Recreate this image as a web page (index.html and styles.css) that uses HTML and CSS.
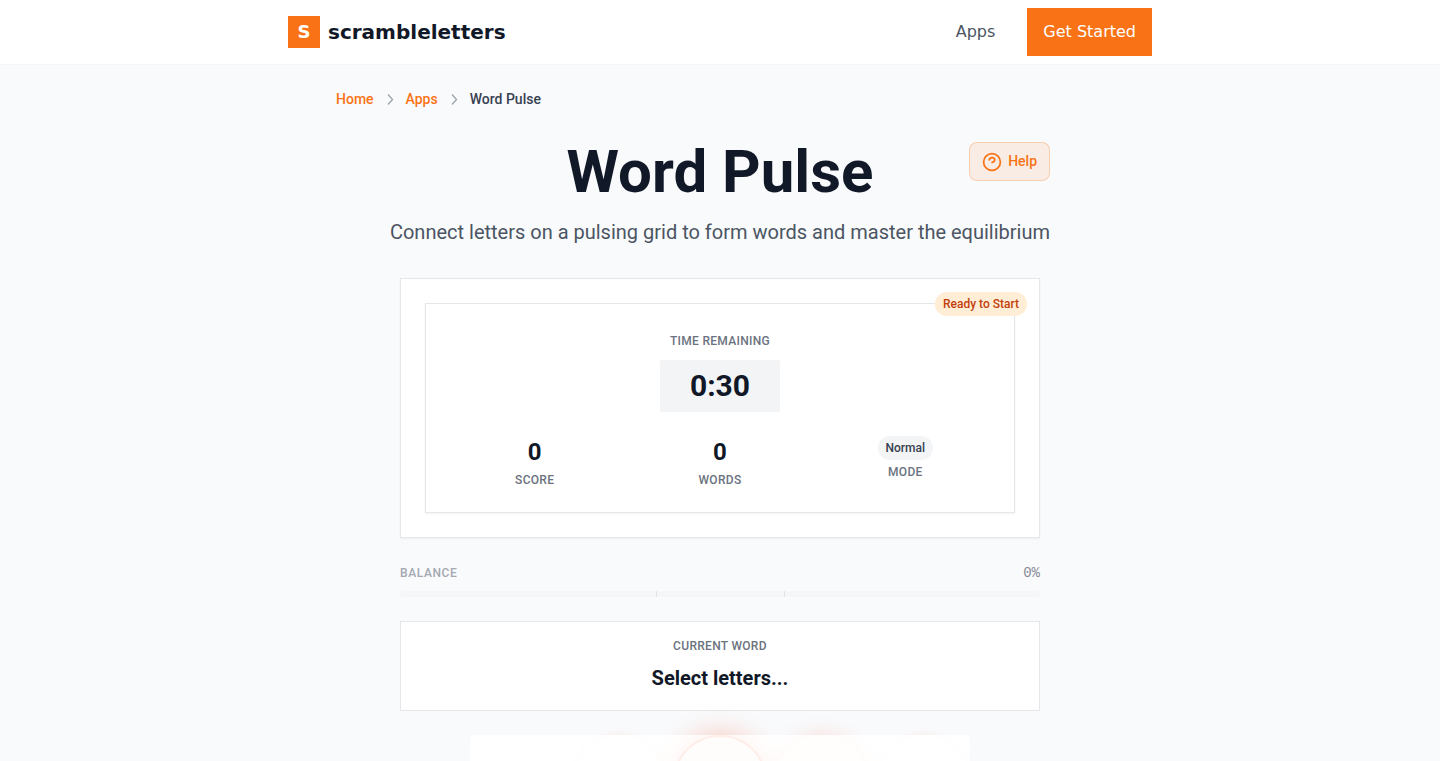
FILE: index.html
```
<!DOCTYPE html>
<html lang="en">
<head>
    <meta charset="UTF-8">
    <meta name="viewport" content="width=device-width, initial-scale=1.0">
    <title>Word Pulse</title>
    <link rel="stylesheet" href="styles.css">
</head>
<body>

    <header class="header">
        <div class="header-inner">
            <a class="brand" href="#">
                <span class="brand-mark">S</span>
                <span>scrambleletters</span>
            </a>
            <nav class="nav">
                <a class="nav-link" href="#">Apps</a>
                <a class="nav-btn" href="#">Get Started</a>
            </nav>
        </div>
    </header>

    <main class="main">
        <nav class="breadcrumb">
            <a href="#">Home</a>
            <svg class="chevron" viewBox="0 0 16 16"><path d="M6 3.5 10.5 8.5 6 13.5"/></svg>
            <a href="#">Apps</a>
            <svg class="chevron" viewBox="0 0 16 16"><path d="M6 3.5 10.5 8.5 6 13.5"/></svg>
            <span>Word Pulse</span>
        </nav>

        <div class="hero">
            <h1>Word Pulse</h1>
            <p>Connect letters on a pulsing grid to form words and master the equilibrium</p>
            <button class="help-btn" type="button">
                <svg viewBox="0 0 20 20">
                    <circle cx="10" cy="10" r="8.4"/>
                    <path d="M7.3 7.9C7.6 6.6 8.7 5.7 10.1 5.7c1.5 0 2.6 1 2.6 2.2 0 1.3-1.1 2-2.6 2.5"/>
                </svg>
                <span>Help</span>
            </button>
        </div>

        <div class="game">
            <section class="card">
                <span class="badge status">Ready to Start</span>
                <div class="panel">
                    <div class="label time-label">Time Remaining</div>
                    <div class="timer">0:30</div>
                    <div class="stats">
                        <div>
                            <div class="value">0</div>
                            <div class="label">Score</div>
                        </div>
                        <div>
                            <div class="value">0</div>
                            <div class="label">Words</div>
                        </div>
                        <div>
                            <span class="badge mode">Normal</span>
                            <div class="label">Mode</div>
                        </div>
                    </div>
                </div>
            </section>

            <section class="balance">
                <div class="balance-row">
                    <span class="label balance-label">Balance</span>
                    <span class="percent">0%</span>
                </div>
                <div class="bar"><div class="zone"></div></div>
            </section>

            <section class="word">
                <div class="label">Current Word</div>
                <div class="word-text">Select letters...</div>
            </section>

            <div class="board">
                <span class="cell"></span>
                <span class="cell low"></span>
                <span class="cell high"></span>
                <span class="cell mid"></span>
                <span class="cell low"></span>
            </div>
        </div>
    </main>

</body>
</html>
```
FILE: styles.css
```
* {
    box-sizing: border-box;
}

body {
    margin: 0;
    background-color: #f9fafc;
    color: #111827;
    font-family: Roboto, sans-serif;
}

a {
    text-decoration: none;
}

h1, p {
    margin: 0;
}

/* Header */
.header {
    background-color: white;
    border-bottom: 1px solid #f3f4f6;
    font-family: "DejaVu Sans", sans-serif;
}

.header-inner {
    display: flex;
    justify-content: space-between;
    align-items: center;
    max-width: 896px;
    height: 64px;
    margin: 0 auto;
    padding: 0 16px;
}

.brand {
    display: flex;
    align-items: center;
    gap: 8px;
    color: #111827;
    font-size: 20px;
    font-weight: bold;
}

.brand-mark {
    width: 32px;
    height: 32px;
    background-color: #f97316;
    color: white;
    font-size: 18px;
    line-height: 32px;
    text-align: center;
}

.nav {
    display: flex;
    align-items: center;
    gap: 32px;
    line-height: 24px;
}

.nav-link {
    color: #4b5563;
}

.nav-btn {
    padding: 12px 16px;
    background-color: #f97316;
    color: white;
}

/* Breadcrumb and title */
.main {
    max-width: 768px;
    margin: 0 auto;
    padding-top: 24px;
}

.breadcrumb {
    display: flex;
    align-items: center;
    gap: 8px;
    margin-bottom: 33px;
    color: #374151;
    font-size: 14px;
    font-weight: 500;
    line-height: 20px;
}

.breadcrumb a {
    color: #f97316;
}

.chevron {
    width: 16px;
    height: 16px;
    fill: none;
    stroke: #9ca3af;
    stroke-width: 1.3;
}

.hero {
    position: relative;
    width: fit-content;
    margin: 0 auto 32px;
    text-align: center;
}

.hero h1 {
    margin-bottom: 16px;
    font-size: 60px;
    font-weight: bold;
    line-height: 60px;
}

.hero p {
    color: #4b5563;
    font-size: 20px;
    line-height: 28px;
}

.help-btn {
    position: absolute;
    top: 0;
    right: 0;
    display: flex;
    align-items: flex-start;
    gap: 6px;
    padding: 9px 12px 8px;
    border: 1px solid rgba(249, 115, 22, 0.25);
    border-radius: 8px;
    background-color: rgba(249, 115, 22, 0.1);
    color: #f97316;
    font-family: inherit;
    font-size: 14px;
    font-weight: 500;
    line-height: 18px;
    cursor: pointer;
}

.help-btn svg {
    width: 20px;
    height: 20px;
    fill: none;
    stroke: currentColor;
    stroke-width: 1.7;
    stroke-linecap: round;
}

/* Score card */
.game {
    display: flex;
    flex-direction: column;
    gap: 24px;
    max-width: 640px;
    margin: 0 auto;
}

.card {
    position: relative;
    padding: 24px;
    border: 1px solid #e5e7eb;
    background-color: white;
    box-shadow: 0 1px 2px rgba(0, 0, 0, 0.05);
}

.panel {
    padding: 24px;
    border: 1px solid #e5e7eb;
    box-shadow: 0 1px 2px rgba(0, 0, 0, 0.05);
    text-align: center;
}

.label {
    color: #6b7280;
    font-size: 12px;
    font-weight: 500;
    letter-spacing: 0.025em;
    line-height: 16px;
    text-transform: uppercase;
}

.time-label {
    margin-bottom: 6px;
    line-height: 26px;
}

.timer {
    width: 120px;
    margin: 0 auto 24px;
    padding: 8px;
    border-radius: 2px;
    background-color: #f3f4f6;
    font-size: 30px;
    font-weight: bold;
    line-height: 36px;
}

.stats {
    display: grid;
    grid-template-columns: repeat(3, 1fr);
    gap: 16px;
}

.value {
    margin-bottom: 4px;
    font-size: 24px;
    font-weight: bold;
    line-height: 32px;
}

.badge {
    padding: 4px 8px;
    border-radius: 12px;
    font-size: 12px;
    font-weight: 500;
    line-height: 16px;
}

.status {
    position: absolute;
    top: 13px;
    right: 12px;
    background-color: #ffedd5;
    color: #c2410c;
}

.mode {
    display: block;
    width: fit-content;
    margin: 0 auto 4px;
    background-color: #f3f4f6;
    color: #374151;
}

/* Balance */
.balance {
    opacity: 0.6;
}

.balance-row {
    display: flex;
    justify-content: space-between;
    align-items: center;
    height: 21px;
    margin-bottom: 8px;
}

.balance-label {
    letter-spacing: 0.05em;
}

.percent {
    color: #374151;
    font-family: "Liberation Mono", monospace;
    font-size: 14px;
}

.bar {
    height: 6px;
    border-radius: 2px;
    background-color: #f3f4f6;
}

.zone {
    width: calc(20% + 1px);
    height: 100%;
    margin-left: 40%;
    border: solid #d1d5db;
    border-width: 0 1px;
}

/* Current word */
.word {
    padding: 16px;
    border: 1px solid #e5e7eb;
    background-color: white;
    text-align: center;
}

.word-text {
    margin-top: 8px;
    font-size: 20px;
    font-weight: bold;
    line-height: 32px;
}

/* Letter board, faded until the game starts */
.board {
    position: relative;
    display: grid;
    grid-template-columns: repeat(5, 1fr);
    gap: 8px;
    width: 100%;
    max-width: 500px;
    margin: 0 auto;
    border-radius: 4px;
    background-color: white;
}

.board::after {
    content: "";
    position: absolute;
    inset: 0;
    border-radius: 4px;
    background-color: rgba(255, 255, 255, 0.75);
}

.cell {
    aspect-ratio: 1;
    border: 1px solid #fafafa;
    border-radius: 50%;
    background-color: white;
}

.low {
    box-shadow: 0 0 10px rgba(244, 80, 30, 0.08);
}

.mid {
    box-shadow: 0 0 20px rgba(244, 80, 30, 0.17);
    background-color: #fffaf8;
}

.high {
    border: 2px solid #f9b8a4;
    box-shadow: 0 0 28px rgba(244, 80, 30, 0.32);
    background-color: #fff6f2;
}
```
